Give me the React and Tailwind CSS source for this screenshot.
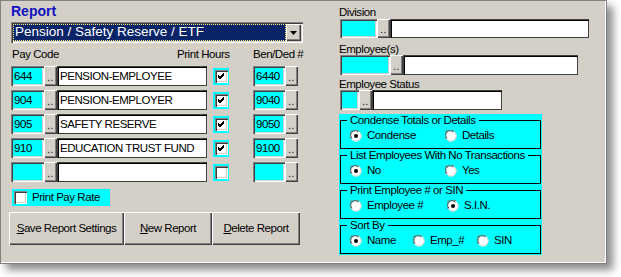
const sunken =
  "shadow-[inset_1px_1px_0_#808080,inset_2px_2px_0_#404040,inset_-1px_-1px_0_#ffffff,inset_-2px_-2px_0_#d4d0c8]";
const raised =
  "shadow-[inset_1px_1px_0_#ffffff,inset_-1px_-1px_0_#404040,inset_-2px_-2px_0_#808080]";

function Dots({ className = "" }) {
  return (
    <div className={`flex items-end justify-center bg-[#d4d0c8] ${raised} ${className}`}>
      <span className="mb-[3px] text-[10px] leading-none tracking-[0.5px]">..</span>
    </div>
  );
}

function Cyan({ value, className = "" }) {
  return (
    <div className={`flex items-center bg-[#00ffff] pl-[3px] pt-[1px] ${sunken} ${className}`}>
      {value}
    </div>
  );
}

function Field({ value, className = "" }) {
  return (
    <div
      className={`flex items-center bg-white pl-[3px] pt-[1px] shadow-[inset_1px_1px_0_#404040,inset_2px_2px_0_#000,inset_-1px_-1px_0_#404040] ${className}`}
    >
      {value}
    </div>
  );
}

function Check({ checked }) {
  return (
    <div className="flex h-[17px] w-[16px] items-center justify-center bg-[#00ffff]">
      <div className={`relative h-[13px] w-[13px] bg-white ${sunken}`}>
        {checked && (
          <svg className="absolute left-[3px] top-[3px]" width="7" height="7" viewBox="0 0 7 7">
            <path d="M0 2 L2 4 L6 0 M0 3 L2 5 L6 1 M0 4 L2 6 L6 2" stroke="#000" strokeWidth="1" fill="none" />
          </svg>
        )}
      </div>
    </div>
  );
}

function Radio({ on }) {
  return (
    <svg width="12" height="12" viewBox="0 0 12 12" className="shrink-0">
      <circle cx="6" cy="6" r="5.5" fill="#fff" />
      <path d="M1 9 A5.5 5.5 0 0 1 9 1" stroke="#808080" strokeWidth="1" fill="none" />
      <path d="M2 8.5 A4.5 4.5 0 0 1 8.5 2" stroke="#404040" strokeWidth="1" fill="none" />
      <path d="M10.5 3 A5.5 5.5 0 0 1 3 10.5" stroke="#d4d0c8" strokeWidth="1" fill="none" />
      {on && <circle cx="6" cy="6" r="2" fill="#000" />}
    </svg>
  );
}

function Opt({ on, label, w }) {
  return (
    <div className="flex items-center gap-[5px]" style={{ width: w }}>
      <Radio on={on} />
      <span>{label}</span>
    </div>
  );
}

function Group({ title, children, className = "" }) {
  return (
    <fieldset className={`h-[35px] border border-black pl-[9px] ${className}`}>
      <legend className="-ml-[3px] px-[3px] leading-[12px]">{title}</legend>
      <div className="mt-[3px] flex h-[14px] items-center">{children}</div>
    </fieldset>
  );
}

const rows = [
  { code: "644", name: "PENSION-EMPLOYEE", hours: true, ben: "6440" },
  { code: "904", name: "PENSION-EMPLOYER", hours: true, ben: "9040" },
  { code: "905", name: "SAFETY RESERVE", hours: true, ben: "9050" },
  { code: "910", name: "EDUCATION TRUST FUND", hours: true, ben: "9100" },
  { code: "", name: "", hours: false, ben: "" },
];

function BigButton({ children, className = "" }) {
  return (
    <button
      type="button"
      className={`flex h-[33px] items-center justify-center bg-[#d4d0c8] ${raised} ${className}`}
    >
      {children}
    </button>
  );
}

export default function App() {
  return (
    <div className="h-[277px] w-[621px] overflow-hidden bg-white font-['Liberation_Sans',Arial,sans-serif] text-[11.5px] tracking-[-0.45px] text-black">
      <div className="flex h-[264px] w-[607px] border border-[#808080] bg-[#d4d0c8] pl-[8px] shadow-[inset_-1px_-1px_0_#ffffff,6px_6px_8px_rgba(0,0,0,0.45)]">
        {/* left column */}
        <div className="flex w-[295px] flex-col">
          <div className="ml-[2px] mt-[1px] h-[18px] text-[14px] font-bold leading-[18px] tracking-normal text-[#1010c0]">
            Report
          </div>
          <div className={`ml-[2px] mt-[2px] flex h-[21px] w-[292px] bg-white p-[2px] ${sunken}`}>
            <div className="flex flex-1 items-center border border-dotted border-[#ffff80] bg-[#0a246a] pl-[1px] text-[13.5px] tracking-normal text-white">
              Pension / Safety Reserve / ETF
            </div>
            <div className={`flex w-[15px] items-center justify-center bg-[#d4d0c8] ${raised}`}>
              <svg width="7" height="4" viewBox="0 0 7 4">
                <path d="M0 0 H7 L3.5 4 Z" fill="#000" />
              </svg>
            </div>
          </div>
          <div className="mt-[5px] flex h-[14px] items-center">
            <span className="ml-[3px] w-[165px]">Pay Code</span>
            <span className="w-[76px]">Print Hours</span>
            <span>Ben/Ded #</span>
          </div>
          <div className="mt-[4px] flex flex-col gap-[4px]">
            {rows.map((r, i) => (
              <div key={i} className="flex h-[20px] items-center">
                <Cyan value={r.code} className="ml-[2px] h-[20px] w-[33px]" />
                <Dots className="h-[20px] w-[13px]" />
                <Field value={r.name} className="h-[20px] w-[150px]" />
                <div className="ml-[6px] w-[40px]">
                  <Check checked={r.hours} />
                </div>
                <Cyan value={r.ben} className="h-[20px] w-[32px]" />
                <Dots className="h-[20px] w-[13px]" />
              </div>
            ))}
          </div>
          <div className="ml-[3px] mt-[7px] flex h-[17px] w-[98px] items-center bg-[#00ffff] pl-[2px]">
            <div className={`h-[13px] w-[13px] bg-white ${sunken}`} />
            <span className="ml-[5px]">Print Pay Rate</span>
          </div>
          <div className="mt-[6px] flex">
            <BigButton className="w-[115px]">
              <span><u>S</u>ave Report Settings</span>
            </BigButton>
            <BigButton className="w-[88px]">
              <span><u>N</u>ew Report</span>
            </BigButton>
            <BigButton className="w-[88px]">
              <span><u>D</u>elete Report</span>
            </BigButton>
          </div>
        </div>

        {/* right column */}
        <div className="ml-[35px] flex w-[252px] flex-col">
          <div className="mt-[5px] h-[13px] leading-[13px]">Division</div>
          <div className="flex h-[19px]">
            <Cyan className="ml-[1px] w-[37px]" />
            <Dots className="w-[13px]" />
            <Field className="w-[199px]" />
          </div>
          <div className="mt-[5px] h-[12px] leading-[12px]">Employee(s)</div>
          <div className="flex h-[20px]">
            <Cyan className="ml-[1px] w-[50px]" />
            <Dots className="w-[13px]" />
            <Field className="w-[175px]" />
          </div>
          <div className="mt-[4px] h-[11px] leading-[11px]">Employee Status</div>
          <div className="flex h-[20px]">
            <Cyan className="ml-[1px] w-[19px]" />
            <Dots className="w-[13px]" />
            <Field className="w-[130px]" />
          </div>
          <div className="mt-[4px] flex w-[203px] flex-col bg-[#00ffff] px-[1px] pb-[1px]">
            <Group title="Condense Totals or Details">
              <Opt on label="Condense" w={95} />
              <Opt label="Details" />
            </Group>
            <Group title="List Employees With No Transactions">
              <Opt on label="No" w={95} />
              <Opt label="Yes" />
            </Group>
            <Group title="Print Employee # or SIN" className="pl-[7px]">
              <Opt label="Employee #" w={97} />
              <Opt on label="S.I.N." />
            </Group>
            <Group title="Sort By">
              <Opt on label="Name" w={63} />
              <Opt label="Emp_#" w={64} />
              <Opt label="SIN" />
            </Group>
          </div>
        </div>
      </div>
    </div>
  );
}
